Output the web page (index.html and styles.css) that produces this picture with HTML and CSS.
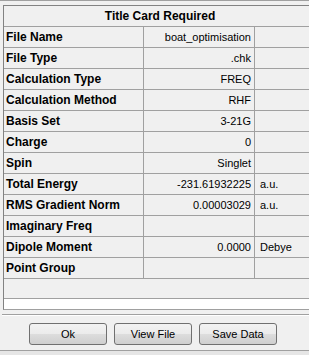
FILE: index.html
```html
<!DOCTYPE html>
<html lang="en">
<head>
    <meta charset="UTF-8">
    <title>Title Card Required</title>
    <link rel="stylesheet" href="styles.css">
</head>
<body>
    <div class="panel">
        <div class="grid">
            <div class="title-row">Title Card Required</div>
            <div class="rows">
                <div class="label">File Name</div><div class="value">boat_optimisation</div><div class="unit"></div>
                <div class="label">File Type</div><div class="value">.chk</div><div class="unit"></div>
                <div class="label">Calculation Type</div><div class="value">FREQ</div><div class="unit"></div>
                <div class="label">Calculation Method</div><div class="value">RHF</div><div class="unit"></div>
                <div class="label">Basis Set</div><div class="value">3-21G</div><div class="unit"></div>
                <div class="label">Charge</div><div class="value">0</div><div class="unit"></div>
                <div class="label">Spin</div><div class="value">Singlet</div><div class="unit"></div>
                <div class="label">Total Energy</div><div class="value">-231.61932225</div><div class="unit">a.u.</div>
                <div class="label">RMS Gradient Norm</div><div class="value">0.00003029</div><div class="unit">a.u.</div>
                <div class="label">Imaginary Freq</div><div class="value"></div><div class="unit"></div>
                <div class="label">Dipole Moment</div><div class="value">0.0000</div><div class="unit">Debye</div>
                <div class="label">Point Group</div><div class="value"></div><div class="unit"></div>
            </div>
            <div class="filler"></div>
            <div class="blank"></div>
        </div>
    </div>

    <div class="separator"></div>

    <div class="buttons">
        <button class="btn">Ok</button>
        <button class="btn">View File</button>
        <button class="btn">Save Data</button>
    </div>

    <div class="bottom-strip"></div>
</body>
</html>
```

FILE: styles.css
```css
body {
    margin: 0;
    width: 309px;
    height: 355px;
    overflow: hidden;
    background: #f0f0f0;
    border-top: 1px solid #a0a0a0;
    box-sizing: border-box;
    font-family: "Liberation Sans", Arial, sans-serif;
    font-size: 11px;
    color: #000;
}

.panel {
    padding: 4px 0 0 3px;
}

/* grid runs past the right edge of the window */
.grid {
    width: 320px;
    border: 1px solid #828282;
    border-right: none;
    border-bottom-color: #a0a0a0;
    background: #f0f0f0;
}

.title-row {
    height: 21px;
    box-sizing: border-box;
    border-bottom: 1px solid #a0a0a0;
    line-height: 20px;
    font-size: 12px;
    font-weight: bold;
    text-align: center;
    padding-right: 8px;
}

.rows {
    display: grid;
    grid-template-columns: 140px 111px 1fr;
}

.rows > div {
    height: 21px;
    box-sizing: border-box;
    border-bottom: 1px solid #a0a0a0;
    line-height: 20px;
    white-space: nowrap;
}

.label {
    border-right: 1px solid #a0a0a0;
    padding-left: 2px;
    font-weight: bold;
    font-size: 12px;
}

.value {
    border-right: 1px solid #a0a0a0;
    text-align: right;
    padding-right: 3px;
}

.unit {
    padding-left: 5px;
}

.filler {
    height: 20px;
    border-bottom: 1px solid #a0a0a0;
    box-sizing: border-box;
}

.blank {
    height: 10px;
    background: #fff;
}

.separator {
    margin-top: 4px;
    height: 1px;
    margin-left: 2px;
    background: #a0a0a0;
    border-bottom: 1px solid #fff;
}

.buttons {
    display: flex;
    gap: 7px;
    padding: 7px 0 0 29px;
}

.btn {
    width: 78px;
    height: 22px;
    padding: 0;
    border: 1px solid #707070;
    border-radius: 3px;
    background: linear-gradient(#f2f2f2 0%, #ebebeb 50%, #dddddd 51%, #cfcfcf 100%);
    font-family: "Liberation Sans", Arial, sans-serif;
    font-size: 11px;
    color: #000;
}

.bottom-strip {
    margin-top: 5px;
    height: 10px;
    border-top: 1px solid #a0a0a0;
    background: #e6e6e6;
}
```
